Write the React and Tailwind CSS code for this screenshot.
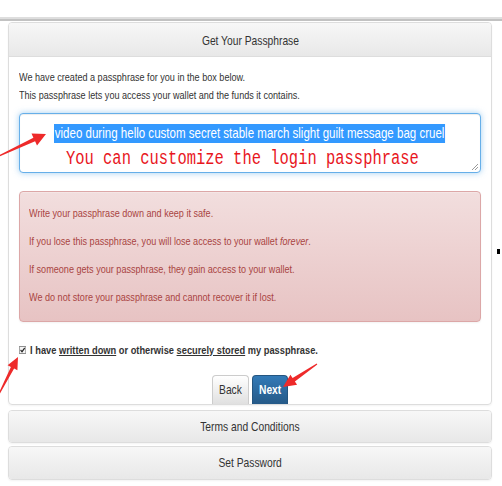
import React from "react";

function arrow(tx, ty, hx, hy, headLen = 12, headHalf = 6, shaftHalf = 1.8) {
  const dx = hx - tx;
  const dy = hy - ty;
  const len = Math.hypot(dx, dy);
  const ux = dx / len;
  const uy = dy / len;
  const px = -uy;
  const py = ux;
  const bx = hx - ux * headLen;
  const by = hy - uy * headLen;
  const pts = [
    [tx + px * 0.6, ty + py * 0.6],
    [bx + px * shaftHalf, by + py * shaftHalf],
    [bx + px * headHalf, by + py * headHalf],
    [hx, hy],
    [bx - px * headHalf, by - py * headHalf],
    [bx - px * shaftHalf, by - py * shaftHalf],
    [tx - px * 0.6, ty - py * 0.6],
  ];
  return pts.map((p) => p[0].toFixed(1) + "," + p[1].toFixed(1)).join(" ");
}

function Panel({ title, h, mt }) {
  return (
    <div className={"border border-[#dddddd] rounded-[4px] shadow-[0_1px_2px_rgba(0,0,0,0.05)] overflow-hidden " + mt}>
      <div className={"flex items-center justify-center bg-linear-to-b from-[#f7f7f7] to-[#e8e8e8] text-[#333] " + h}>
        <span className="inline-block scale-x-[0.79] whitespace-nowrap text-[13px]">{title}</span>
      </div>
    </div>
  );
}

export default function App() {
  return (
    <div className="relative w-[502px] h-[486px] overflow-hidden bg-white text-[#333] [font-family:'Liberation_Sans',Arial,sans-serif]">
      <div className="h-[17px]" />
      <div className="h-[2px] bg-[#dedede]" />
      <div className="h-[2px] bg-[#c2c2c2]" />
      <div className="ml-[8px] w-[484px]">
        <div className="mt-[1px] border border-[#dddddd] rounded-[4px] overflow-hidden shadow-[0_1px_2px_rgba(0,0,0,0.05)]">
          <div className="h-[34px] flex items-center justify-center border-b border-[#dddddd] bg-linear-to-b from-[#f7f7f7] to-[#e8e8e8]">
            <span className="inline-block scale-x-[0.79] whitespace-nowrap text-[13px] translate-y-[1px]">Get Your Passphrase</span>
          </div>
          <div className="px-[10px] pt-[11px]">
            <p className="origin-left scale-x-[0.79] whitespace-nowrap text-[11.5px] leading-[18px]">
              We have created a passphrase for you in the box below.
            </p>
            <p className="origin-left scale-x-[0.79] whitespace-nowrap text-[11.5px] leading-[18px]">
              This passphrase lets you access your wallet and the funds it contains.
            </p>

            <div className="relative mt-[9px] h-[60px] border border-[#66afe9] rounded-[4px] shadow-[inset_0_1px_1px_rgba(0,0,0,0.075),0_0_6px_rgba(102,175,233,0.6)] bg-white pt-[10px]">
              <div className="flex justify-center">
                <span className="inline-block scale-x-[0.79] whitespace-nowrap bg-[#3399ff] text-white text-[14.6px] leading-[19px] px-[1px]">
                  video during hello custom secret stable march slight guilt message bag cruel
                </span>
              </div>
              <div className="flex justify-center mt-[7px] pr-[15px]">
                <span className="inline-block scale-x-[0.79] whitespace-nowrap leading-[18px] text-[19.6px] text-[#e8161d] [font-family:'Liberation_Mono','Courier_New',monospace]">
                  You can customize the login passphrase
                </span>
              </div>
              <svg className="absolute right-[1px] bottom-[1px]" width="8" height="8" viewBox="0 0 8 8">
                <line x1="7" y1="1" x2="1" y2="7" stroke="#9a9a9a" strokeWidth="1" />
                <line x1="7" y1="4" x2="4" y2="7" stroke="#9a9a9a" strokeWidth="1" />
              </svg>
            </div>

            <div className="mt-[18px] border border-[#dca7a7] rounded-[4px] bg-linear-to-b from-[#f2dede] to-[#e7c3c3] text-[#a94442] text-[11.5px] leading-[18px] px-[9px] pt-[12px] pb-[15px] flex flex-col gap-[10px] shadow-[inset_0_1px_0_rgba(255,255,255,0.25),0_1px_2px_rgba(0,0,0,0.05)]">
              <p className="origin-left scale-x-[0.79] whitespace-nowrap">Write your passphrase down and keep it safe.</p>
              <p className="origin-left scale-x-[0.79] whitespace-nowrap">
                If you lose this passphrase, you will lose access to your wallet <em>forever</em>.
              </p>
              <p className="origin-left scale-x-[0.79] whitespace-nowrap">
                If someone gets your passphrase, they gain access to your wallet.
              </p>
              <p className="origin-left scale-x-[0.79] whitespace-nowrap">
                We do not store your passphrase and cannot recover it if lost.
              </p>
            </div>

            <div className="mt-[19px] origin-left scale-x-[0.79] flex items-center gap-[5px] h-[18px] whitespace-nowrap">
              <svg width="9" height="8" viewBox="0 0 9 8" preserveAspectRatio="none" className="shrink-0">
                <rect x="0.5" y="0.5" width="8" height="7" fill="#f4f4f4" stroke="#8f8f8f" />
                <path d="M2 4.1 L3.8 5.8 L7.2 2" fill="none" stroke="#222" strokeWidth="1.4" />
              </svg>
              <span className="font-bold text-[11.75px] leading-[18px]">
                I have <span className="underline">written down</span> or otherwise{" "}
                <span className="underline">securely stored</span> my passphrase.
              </span>
            </div>

            <div className="mt-[16px] flex justify-center gap-[3px]">
              <div className="w-[37px] h-[29px] flex items-center justify-center rounded-t-[4px] border border-b-0 border-[#cccccc] bg-linear-to-b from-white to-[#e0e0e0] text-[#333]">
                <span className="inline-block scale-x-[0.79] text-[13px]">Back</span>
              </div>
              <div className="w-[36px] h-[29px] flex items-center justify-center rounded-t-[4px] border border-b-0 border-[#245580] bg-linear-to-b from-[#337ab7] to-[#265a88] text-white">
                <span className="inline-block scale-x-[0.79] text-[13px] font-bold">Next</span>
              </div>
            </div>
          </div>
        </div>
        <Panel title="Terms and Conditions" h="h-[31px]" mt="mt-[5px]" />
        <Panel title="Set Password" h="h-[32px]" mt="mt-[3px]" />
      </div>

      <div className="absolute left-[497px] top-[249px] w-[3px] h-[5px] bg-black" />

      <svg className="absolute left-0 top-0 pointer-events-none" width="502" height="486" viewBox="0 0 502 486">
        <polygon points={arrow(-3, 157, 46, 134, 13, 6.5, 2)} fill="#ee2a2a" />
        <polygon points={arrow(-1, 394, 18, 357, 12, 5.5, 1.8)} fill="#ee2a2a" />
        <polygon points={arrow(317, 364, 283, 387, 13, 6, 2)} fill="#ee2a2a" />
      </svg>
    </div>
  );
}
